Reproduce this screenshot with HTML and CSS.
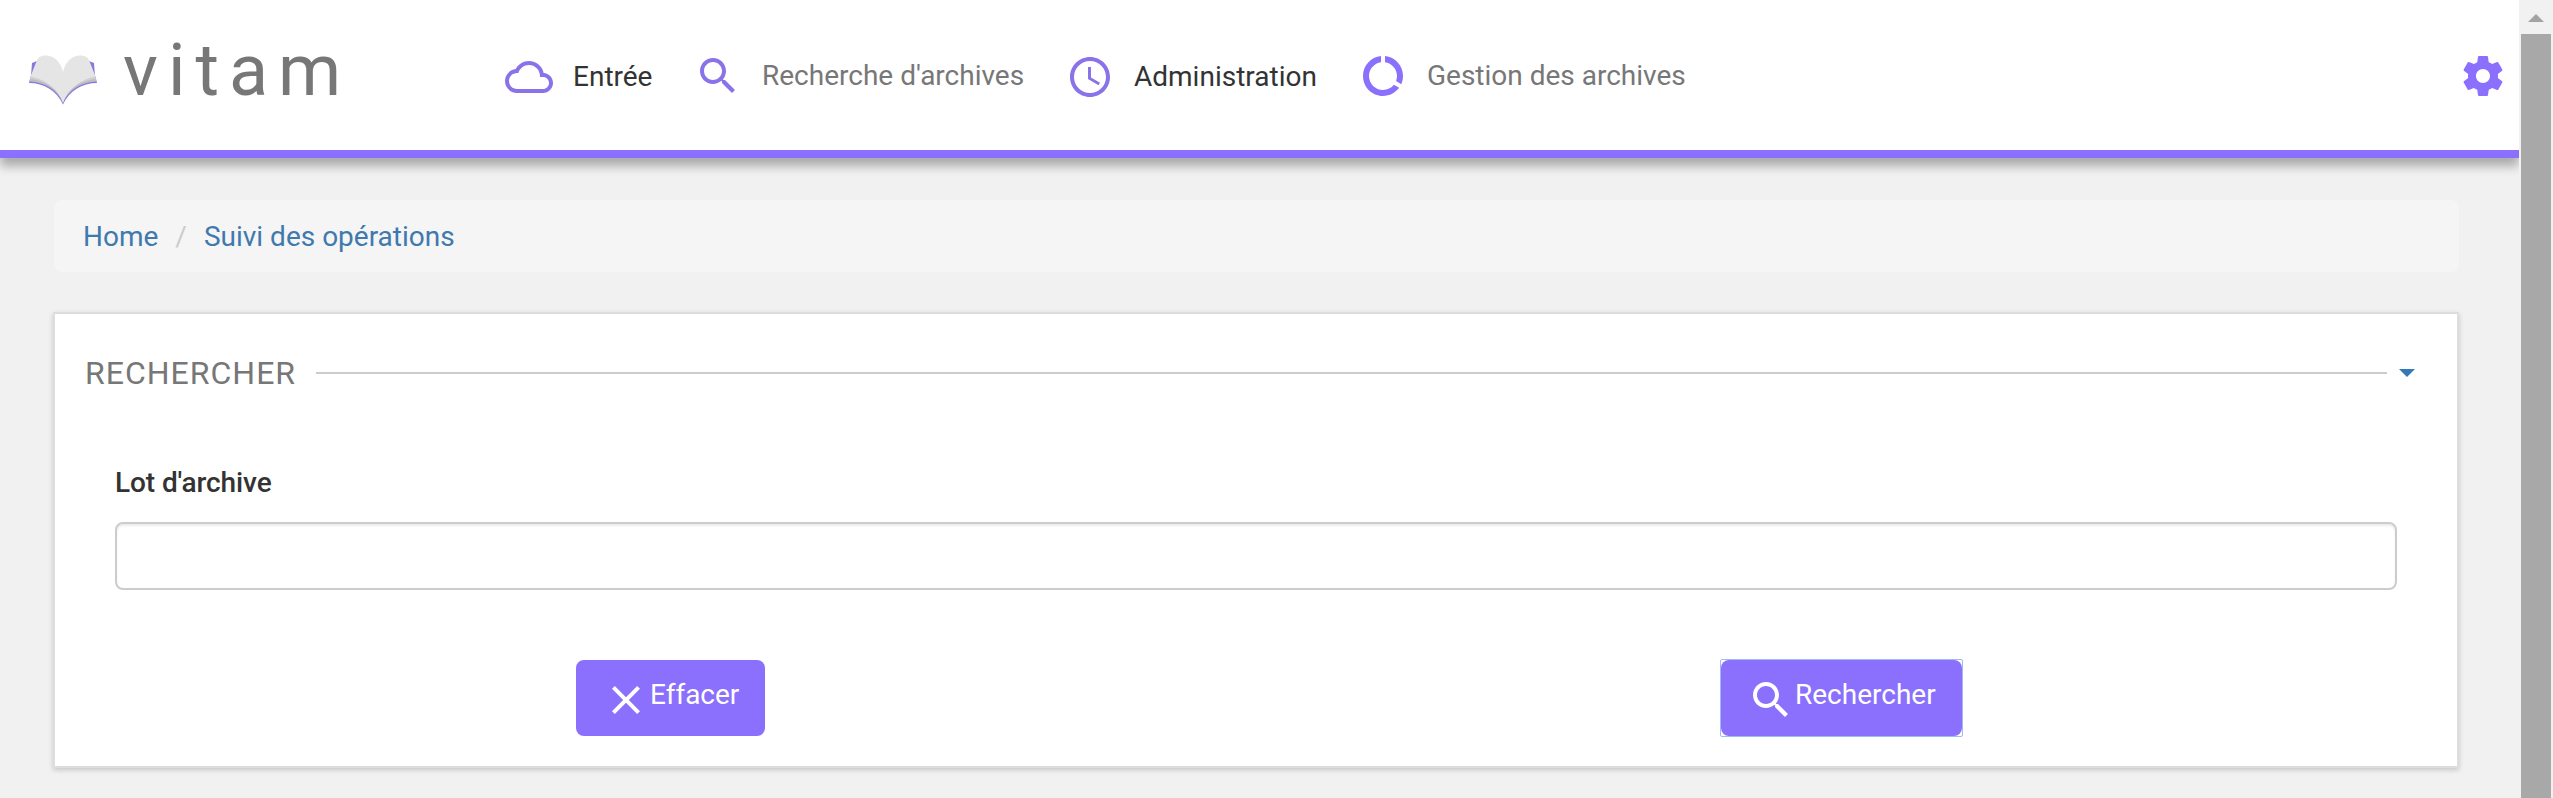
FILE: index.html
```html
<!DOCTYPE html>
<html lang="fr">
<head>
<meta charset="utf-8">
<title>Vitam - Suivi des opérations</title>
<link rel="stylesheet" href="styles.css">
</head>
<body>
<div class="window">
  <div class="page">
    <header class="header">
      <div class="brand">
        <svg class="brand-mark" viewBox="0 0 68 50">
          <path d="M3 8l5-2v13l-6 2zM65 8l-5-2v13l6 2z" fill="#8b78dd"/>
          <path d="M0 28C15 28 28 36 34 49.500C40 36 53 28 68 28L66.500 22H1.500z" fill="#8878e0"/>
          <path d="M.5 26.500C15 27 29 35 34 48C39 35 53 27 67.500 26.500L66.500 21H1.500z" fill="#bdbdbd"/>
          <path d="M1 24C16 25.500 30 34 34 47.500C38 34 52 25.500 67 24L66 20H2z" fill="#d0d0d0"/>
          <path d="M8 5C10 1.500 13 .5 17 .5C25 .5 32 7 34 17C36 7 43 .5 51 .5C55 .5 58 1.500 60 5L66.500 21.500C52 24 39 34 34 47.500C29 34 16 24 1.500 21.500z" fill="#e5e5e5"/>
        </svg>
        <span class="brand-name">vitam</span>
      </div>
      <nav class="nav">
        <a class="nav-item nav-dark"><svg class="icon" viewBox="0 0 24 24"><path d="M19.350 10.040C18.670 6.590 15.640 4 12 4 9.110 4 6.600 5.640 5.350 8.040 2.340 8.360 0 10.910 0 14c0 3.310 2.690 6 6 6h13c2.760 0 5-2.240 5-5 0-2.640-2.050-4.780-4.650-4.960zM19 18H6c-2.210 0-4-1.790-4-4s1.790-4 4-4h.710C7.370 7.690 9.480 6 12 6c3.040 0 5.500 2.460 5.500 5.500v.5H19c1.660 0 3 1.340 3 3s-1.340 3-3 3z"/></svg><span>Entrée</span></a>
        <a class="nav-item nav-search"><svg class="icon" viewBox="0 0 24 24"><path d="M15.500 14h-.79l-.28-.27C15.410 12.590 16 11.110 16 9.500 16 5.910 13.090 3 9.500 3S3 5.910 3 9.500 5.910 16 9.500 16c1.610 0 3.090-.59 4.230-1.570l.27.28v.79l5 4.990L20.490 19l-4.990-5zm-6 0C7.010 14 5 11.990 5 9.500S7.010 5 9.500 5 14 7.010 14 9.500 11.990 14 9.500 14z"/></svg><span>Recherche d'archives</span></a>
        <a class="nav-item nav-dark nav-admin"><svg class="icon" viewBox="0 0 24 24"><path d="M11.990 2C6.470 2 2 6.480 2 12s4.470 10 9.990 10C17.520 22 22 17.520 22 12S17.520 2 11.990 2zM12 20c-4.420 0-8-3.580-8-8s3.580-8 8-8 8 3.580 8 8-3.580 8-8 8zM12.500 7H11v6l5.250 3.150.75-1.230-4.500-2.670z"/></svg><span>Administration</span></a>
        <a class="nav-item nav-manage"><svg class="icon icon-bright" viewBox="0 0 24 24"><path d="M13 2.050v3.030c3.390.49 6 3.390 6 6.920 0 .9-.18 1.750-.48 2.540l2.600 1.530c.56-1.240.88-2.620.88-4.070 0-5.180-3.950-9.450-9-9.950zM12 19c-3.870 0-7-3.130-7-7 0-3.530 2.610-6.430 6-6.920V2.050c-5.060.5-9 4.760-9 9.950 0 5.520 4.470 10 9.990 10 3.310 0 6.240-1.610 8.060-4.090l-2.600-1.530C16.170 17.980 14.210 19 12 19z"/></svg><span>Gestion des archives</span></a>
      </nav>
      <svg class="icon icon-bright settings" viewBox="0 0 24 24"><path d="M19.430 12.980c.04-.32.07-.64.07-.98s-.03-.66-.07-.98l2.110-1.650c.19-.15.24-.42.12-.64l-2-3.460c-.12-.22-.39-.3-.61-.22l-2.490 1c-.52-.4-1.080-.73-1.690-.98l-.38-2.650C14.460 2.180 14.250 2 14 2h-4c-.25 0-.46.180-.49.420l-.38 2.650c-.61.250-1.170.590-1.690.980l-2.490-1c-.23-.09-.49 0-.61.220l-2 3.460c-.13.220-.07.490.12.640l2.110 1.650c-.04.320-.07.650-.07.980s.03.660.07.980l-2.110 1.650c-.19.150-.24.420-.12.640l2 3.460c.12.220.39.300.61.220l2.490-1c.52.400 1.080.730 1.690.980l.38 2.650c.03.240.24.420.49.420h4c.25 0 .46-.18.490-.42l.38-2.650c.61-.25 1.170-.59 1.690-.98l2.490 1c.23.090.49 0 .61-.22l2-3.460c.12-.22.070-.49-.12-.64l-2.110-1.650zM12 15.500c-1.930 0-3.500-1.570-3.500-3.500s1.570-3.500 3.500-3.500 3.500 1.570 3.500 3.500-1.570 3.500-3.500 3.500z"/></svg>
    </header>
    <main class="content">
      <div class="breadcrumb"><a>Home</a><span class="slash">/</span><a>Suivi des opérations</a></div>
      <section class="card">
        <div class="card-head">
          <h2 class="card-title">RECHERCHER</h2>
          <div class="rule"></div>
          <svg class="caret" viewBox="0 0 16 8"><path d="M0 0h16L8 8z"/></svg>
        </div>
        <label class="label" for="lot">Lot d'archive</label>
        <input class="field" id="lot" type="text">
        <div class="actions">
          <button class="btn" type="button"><svg class="btn-icon" viewBox="0 0 24 24"><path d="M19 6.410L17.590 5 12 10.590 6.410 5 5 6.410 10.590 12 5 17.590 6.410 19 12 13.410 17.590 19 19 17.590 13.410 12z"/></svg><span>Effacer</span></button>
          <div class="focus-ring">
            <button class="btn btn-wide" type="button"><svg class="btn-icon" viewBox="0 0 24 24"><path d="M15.500 14h-.79l-.28-.27C15.410 12.590 16 11.110 16 9.500 16 5.910 13.090 3 9.500 3S3 5.910 3 9.500 5.910 16 9.500 16c1.610 0 3.090-.59 4.230-1.570l.27.28v.79l5 4.990L20.490 19l-4.990-5zm-6 0C7.010 14 5 11.990 5 9.500S7.010 5 9.500 5 14 7.010 14 9.500 11.990 14 9.500 14z"/></svg><span>Rechercher</span></button>
          </div>
        </div>
      </section>
    </main>
  </div>
  <div class="scrollbar">
    <svg class="scroll-up" viewBox="0 0 16 8"><path d="M0 8h16L8 0z"/></svg>
    <div class="thumb"></div>
  </div>
</div>
</body>
</html>
```
FILE: styles.css
```css
* { box-sizing: border-box; }
body {
  margin: 0;
  background: #f1f1f1;
  color: #333;
  font: 28px/40px Roboto, sans-serif;
  overflow: hidden;
}
.window { display: flex; height: 798px; }
.page { flex: 1; overflow: hidden; }
.header {
  display: flex;
  height: 158px;
  background: #fff;
  border-bottom: 8px solid #8b70fd;
  box-shadow: 0 8px 10px rgba(0, 0, 0, .3);
}
.brand { display: flex; width: 505px; padding-left: 29px; }
.brand-mark { width: 68px; height: 50px; margin-top: 55px; }
.brand-name {
  margin: 25px 0 0 26px;
  font-size: 72px;
  line-height: 92px;
  letter-spacing: 10px;
  color: #777;
}
.nav { display: flex; padding-top: 52px; }
.nav-item { display: flex; height: 48px; color: #777; white-space: nowrap; }
.nav-item span { margin: 4px 0 0 20px; }
.nav-dark { width: 189px; padding-top: 1px; color: #333; }
.nav-search { width: 372px; }
.nav-admin { width: 293px; }
.icon { width: 48px; height: 48px; fill: #8a72e8; flex: none; }
.icon-bright { fill: #8b70fd; }
.settings { margin: 52px 12px 0 auto; }
.content { padding: 42px 60px 0 53px; }
.breadcrumb {
  height: 72px;
  margin-left: 1px;
  padding: 17px 28px 0 29px;
  background: #f5f5f5;
  border-radius: 8px;
  color: #4079ae;
}
.slash { color: #ccc; padding: 0 17px 0 17px; }
.card {
  height: 456px;
  margin-top: 40px;
  border: 2px solid #ddd;
  background: #fff;
  box-shadow: 0 2px 5px rgba(0, 0, 0, .18);
}
.card-head { display: flex; align-items: center; height: 44px; margin: 37px 42px 0 30px; }
.card-title { margin: 0; font-size: 32px; font-weight: 400; letter-spacing: 1px; width: 231px; color: #777; }
.rule { flex: 1; height: 2px; background: #ccc; }
.caret { width: 16px; height: 8px; margin-left: 12px; fill: #337ab7; }
.label { display: block; margin: 68px 0 0 60px; font-weight: 500; letter-spacing: -.1px; }
.field {
  display: block;
  width: 2282px;
  height: 68px;
  margin: 19px 0 0 60px;
  border: 2px solid #ccc;
  border-radius: 8px;
  background: #fff;
  box-shadow: inset 0 2px 2px rgba(0, 0, 0, .075);
}
.actions { display: flex; gap: 956px; margin: 70px 0 0 521px; }
.btn {
  display: flex;
  width: 189px;
  height: 76px;
  padding: 16px 0 0 26px;
  border: 0;
  border-radius: 8px;
  background: #8b70fd;
  color: #fff;
  font: inherit;
}
.btn span { margin-top: -1px; }
.btn-icon { width: 48px; height: 48px; fill: #fff; flex: none; }
.btn-wide { width: 241px; }
.focus-ring { outline: 1px solid #9cbcf3; border-radius: 1px; }
.scrollbar { width: 34px; padding: 14px 2px 0; background: #f1f1f1; }
.scroll-up { display: block; width: 16px; height: 8px; margin: 0 auto 12px; fill: #a3a3a3; }
.thumb { height: 764px; background: #a8a8a8; }
```
